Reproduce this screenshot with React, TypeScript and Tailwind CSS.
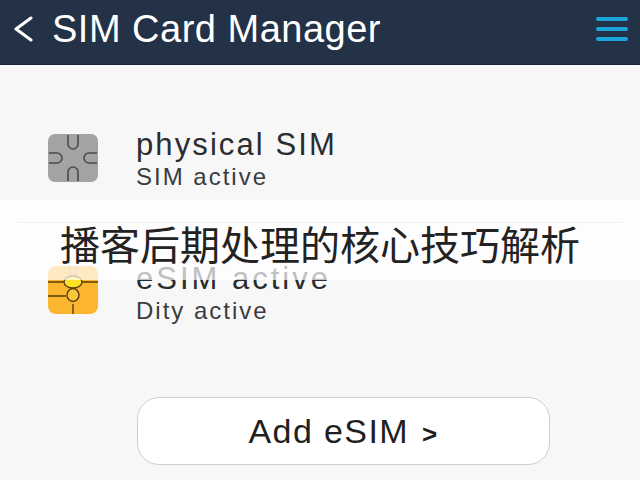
function PhysicalSimIcon() {
  return (
    <svg width="50" height="48" viewBox="0 0 50 48" className="block">
      <rect x="0" y="0" width="50" height="48" rx="7" fill="#a3a3a3" />
      <g fill="none" stroke="#4b4b4b" strokeWidth="1.6">
        <path d="M20 1v9a5 5 0 0 0 10 0V1" />
        <path d="M20 47v-9a5 5 0 0 1 10 0v9" />
        <path d="M1 19h8a5 5 0 0 1 0 10H1" />
        <path d="M49 19h-8a5 5 0 0 0 0 10h8" />
      </g>
    </svg>
  );
}

function EsimIcon() {
  return (
    <svg width="50" height="48" viewBox="0 0 50 48" className="block">
      <rect x="0" y="0" width="50" height="48" rx="8" fill="#fbb52f" />
      <path d="M22 0v11M28 0v11" stroke="#a8a08c" strokeWidth="1.5" />
      <g fill="none" stroke="#5a3d10" strokeWidth="1.4">
        <path d="M0 16h16M34 16h16M0 30h18M25 38v10" />
        <ellipse cx="25" cy="16" rx="9" ry="6" fill="#fce227" />
        <ellipse cx="25" cy="29" rx="6" ry="6.5" fill="#fbc73a" />
      </g>
    </svg>
  );
}

function SimRow({ icon, title, sub, textClass, titleClass }: { icon: React.ReactNode; title: string; sub: string; textClass: string; titleClass: string }) {
  return (
    <div className="flex items-start h-[63px]">
      <div className="w-[50px] shrink-0">{icon}</div>
      <div className={`ml-[38px] text-[#2a2c30] ${textClass}`}>
        <div className={`text-[31px] leading-[34px] ${titleClass}`}>{title}</div>
        <div className="text-[24px] leading-[30px] tracking-[2px] text-[#3a3c40]">{sub}</div>
      </div>
    </div>
  );
}

export default function App() {
  return (
    <div className="relative w-[640px] h-[480px] overflow-hidden bg-[#f7f7f7] font-['Liberation_Sans',sans-serif]">
      {/* Header */}
      <header className="h-[65px] bg-[#233247] flex items-center pl-[13px] pr-[12px] pb-[6px] border-b border-[#1c2838]">
        <svg width="20" height="26" viewBox="0 0 20 26" className="shrink-0">
          <path d="M18 2 3 13l15 11" fill="none" stroke="#fff" strokeWidth="3" strokeLinecap="round" strokeLinejoin="round" />
        </svg>
        <h1 className="ml-[19px] flex-1 text-[38px] leading-none text-white tracking-[0.5px]">SIM Card Manager</h1>
        <div className="flex flex-col gap-[6px] w-[32px]">
          <span className="h-[4px] rounded-full bg-[#1ba3dc]" />
          <span className="h-[4px] rounded-full bg-[#1ba3dc]" />
          <span className="h-[4px] rounded-full bg-[#1ba3dc]" />
        </div>
      </header>

      {/* SIM list */}
      <main className="pt-[69px] pl-[48px]">
        <SimRow icon={<PhysicalSimIcon />} title="physical SIM" sub="SIM active" textClass="-mt-[6px]" titleClass="tracking-[2.1px]" />
        <div className="-ml-[30px] mr-[18px] mt-[25px] h-px bg-[#c8c8c8]" />
        <div className="mt-[43px]">
          <SimRow icon={<EsimIcon />} title="eSIM active" sub="Dity active" textClass="-mt-[4px]" titleClass="tracking-[3px]" />
        </div>
      </main>

      <div className="mt-[68px] pl-[137px]">
        <button className="w-[413px] h-[68px] rounded-[22px] bg-white border border-[#cfcfcf] text-[34px] text-[#1f1f1f] tracking-[1.4px]">
          Add eSIM <span className="ml-[2px] text-[26px] font-bold">&gt;</span>
        </button>
      </div>

      {/* Title banner over the screenshot */}
      <div className="absolute left-0 right-0 top-[200px] h-[80px] bg-white/70 flex items-center justify-center pt-[6px]">
        <span className="text-[40px] leading-none text-[#222] font-['Noto_Sans_CJK_SC',sans-serif]">播客后期处理的核心技巧解析</span>
      </div>
    </div>
  );
}
